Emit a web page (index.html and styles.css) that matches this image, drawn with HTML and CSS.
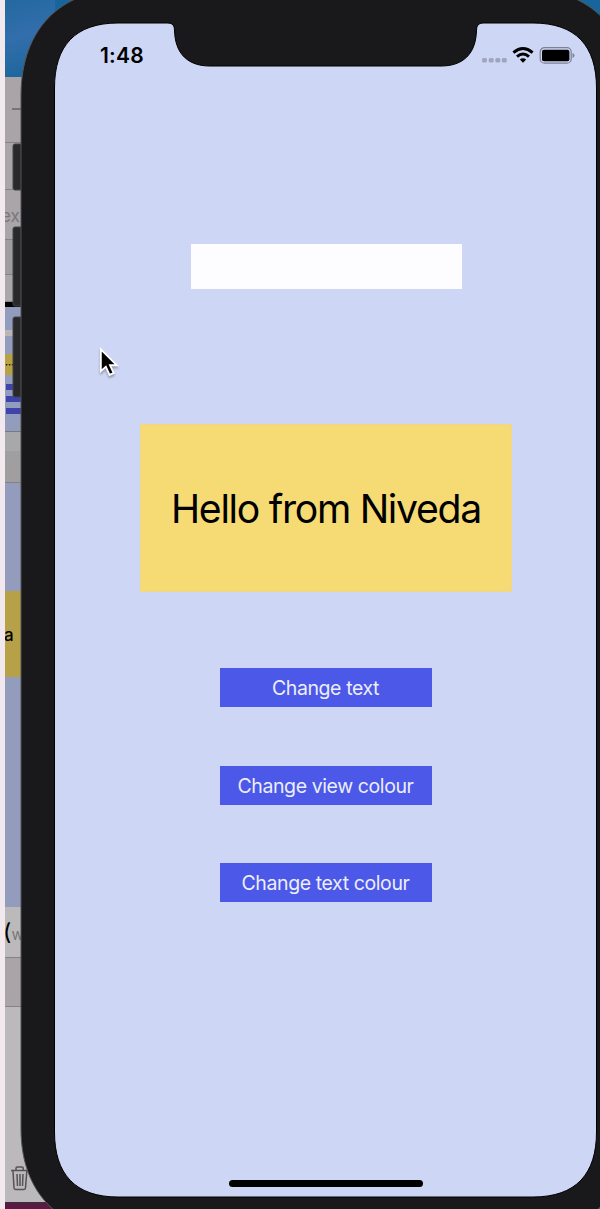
FILE: index.html
```html
<!DOCTYPE html>
<html lang="en">
<head>
<meta charset="utf-8">
<title>Simulator</title>
<link rel="stylesheet" href="styles.css">
</head>
<body>
<div class="desktop">
  <div class="backdrop">
    <div class="wallpaper"></div>
    <div class="toolbar"><span class="dash"></span></div>
    <div class="pane pane-a"></div>
    <div class="pane pane-b">ex</div>
    <div class="pane pane-c"></div>
    <div class="pane pane-d"></div>
    <div class="black-bar"></div>
    <div class="preview">
      <div class="mini-field"></div>
      <div class="mini-label">···</div>
      <div class="mini-button"></div>
      <div class="mini-button"></div>
      <div class="mini-button"></div>
    </div>
    <div class="pane pane-e"></div>
    <div class="pane pane-f"></div>
    <div class="canvas"><div class="canvas-label">a</div></div>
    <div class="device-name"><span class="paren">(</span><span class="w">w</span></div>
    <div class="pane pane-g"></div>
    <div class="footer">
      <svg width="18" height="26" viewBox="0 0 18 26" fill="none" stroke="#555356" stroke-width="1.5"><path d="M0 4.500H18M5 4V2.200Q5 1 6.200 1H11Q12.200 1 12.200 2.200V4M2 5L3 22Q3.100 23.400 4.500 23.400H13Q14.400 23.400 14.500 22L15.800 5M6 8L6.500 20M9 8V20M12 8L11.500 20"/></svg>
    </div>
    <div class="dock"></div>
  </div>

  <div class="phone">
    <svg class="frame" width="600" height="1209" viewBox="0 0 600 1209">
      <g class="side-buttons">
        <rect x="13" y="144" width="14" height="46" rx="2"/>
        <rect x="13" y="227" width="14" height="79" rx="2"/>
        <rect x="13" y="317" width="14" height="80" rx="2"/>
      </g>
      <path class="bezel" d="M21 95C21 30 60 -11 125 -11H526C591 -11 630 30 630 95V1129C630 1193 591 1233 526 1233H125C60 1233 21 1193 21 1129Z"/>
      <path class="glass" d="M54.500 88C54.500 46 75 23 118 23H168Q174.500 23 174.500 30C175 54 188 66 210 66H441C463 66 476 54 476.500 30Q476.500 23 483 23H533C576 23 596.500 46 596.500 88V1132C596.500 1174 576 1197 533 1197H118C75 1197 54.500 1174 54.500 1132Z"/>
    </svg>
    <div class="screen">
      <div class="status">
        <span class="time">1:48</span>
        <svg width="94" height="18" viewBox="0 0 94 18">
          <g fill="#a0a5bf"><rect x="1" y="12" width="5" height="4.500" rx="1.500"/><rect x="7.700" y="12" width="5" height="4.500" rx="1.500"/><rect x="14.300" y="12" width="5" height="4.500" rx="1.500"/><rect x="20.800" y="12" width="5" height="4.500" rx="1.500"/></g>
          <g fill="none" stroke="#000" stroke-width="3"><path d="M32.400 6.600Q42 -1.500 51.600 6.600M36 10.600Q42 5.400 48 10.600"/></g>
          <path d="M38.800 13.600Q42 10.800 45.200 13.600L42 16.800Z"/>
          <rect x="59.200" y="1.700" width="31" height="15.500" rx="4.300" fill="none" stroke="#7c8193" stroke-width="1.200"/>
          <rect x="61" y="3.700" width="27.400" height="11.500" rx="2"/>
          <path d="M91.500 6.900Q93.500 7.700 93.500 9.500Q93.500 11.200 91.500 12Z" fill="#7c8193"/>
        </svg>
      </div>
      <div class="field"></div>
      <div class="hello">Hello from Niveda</div>
      <div class="buttons">
        <div class="button">Change text</div>
        <div class="button">Change view colour</div>
        <div class="button last">Change text colour</div>
      </div>
      <div class="home"></div>
    </div>
  </div>

  <svg class="cursor" width="22" height="32" viewBox="0 0 24 34"><path d="M2 2V26L7.500 21L11.500 30L16 28L12 19.500H19.500Z" fill="#000" stroke="#fff" stroke-width="2"/></svg>
</div>
</body>
</html>
```

FILE: styles.css
```css
* { box-sizing: border-box; }
body { margin: 0; font-family: Inter, "Liberation Sans", sans-serif; }
.desktop {
  position: relative;
  width: 600px;
  height: 1209px;
  overflow: hidden;
  background: linear-gradient(90deg, #f1e9ee 0 5px, #17659a 5px);
}

.backdrop {
  display: flex;
  flex-direction: column;
  width: 50px;
  height: 1209px;
  margin-left: 5px;
  overflow: hidden;
  background: #b0acaf;
}
.backdrop > div { flex: none; }
.wallpaper { height: 77px; background: linear-gradient(165deg, #24699f, #326eac 45%, #19659a); }
.toolbar { height: 66px; padding: 31px 0 0 7px; background: #aaa4a8; border-bottom: 1px solid #858184; }
.dash { display: block; width: 20px; height: 2px; background: #777376; }
.pane { background: #aaa5a8; border-bottom: 1px solid #858184; }
.pane-a { height: 47px; }
.pane-b { height: 50px; padding-top: 16px; font-size: 17px; line-height: 20px; text-indent: -4px; color: #7b7779; }
.pane-c { height: 35px; background: #a09da0; }
.pane-d { height: 27px; background: #aaa7a9; }
.black-bar { height: 5px; background: #000; }
.preview { height: 124px; padding-top: 23px; background: #929dbd; }
.mini-field { height: 6px; background: #bab6b8; }
.mini-label { height: 21px; margin: 18px 0 9px; background: #b9a244; font-size: 9px; line-height: 21px; font-weight: 700; }
.mini-button { height: 6px; margin: 0 0 6px 1px; background: #4143ad; }
.pane-e { height: 20px; background: #a7a8aa; border-top: 1px solid #77797e; border-bottom: 0; }
.pane-f { height: 32px; background: #a09e9f; }
.canvas { height: 424px; padding-top: 108px; background: #949cbd; }
.canvas-label { height: 86px; background: #b6a148; font-size: 17px; font-weight: 500; line-height: 89px; text-indent: -1px; }
.device-name { height: 51px; padding-top: 12px; background: #bcb9bb; border-bottom: 1px solid #858184; font-size: 23px; line-height: 26px; white-space: nowrap; }
.paren { margin-left: -2px; }
.w { font-size: 15px; color: #777; }
.pane-g { height: 49px; background: #aaa4a8; }
.footer { height: 195px; padding: 159px 0 0 6px; background: #bbb9bb; }
.dock { height: 7px; background: #581c43; border-top: 1px solid #3b3037; }

.phone { position: absolute; inset: 0; }
.frame { position: absolute; inset: 0; }
.side-buttons { fill: #29292b; stroke: #454547; }
.bezel { fill: #19181a; stroke: #555557; stroke-width: 1; }
.glass { fill: #cdd6f5; stroke: #000; stroke-width: 1; }
.screen {
  position: relative;
  display: flex;
  flex-direction: column;
  align-items: center;
  width: 542px;
  margin-left: 55px;
  padding-top: 43px;
}
.status { display: flex; justify-content: space-between; align-self: stretch; height: 25px; padding: 3px 22px 0 45px; }
.time { font-size: 21px; font-weight: 600; line-height: 20px; letter-spacing: 0.2px; }
.field { width: 271px; height: 45px; margin-top: 176px; background: #fdfcff; }
.hello {
  width: 372px;
  height: 168px;
  margin-top: 135px;
  background: #f6db75;
  border: 1px solid #ecd78b;
  font-size: 39.2px;
  line-height: 168px;
  letter-spacing: -1.3px;
  text-align: center;
  white-space: nowrap;
}
.buttons { display: flex; flex-direction: column; gap: 59px; margin: 76px 1px 0 0; }
.button { width: 212px; height: 39px; background: #4b58e8; color: #eceefa; font-size: 19.5px; line-height: 40px; letter-spacing: -0.4px; text-align: center; white-space: nowrap; }
.last { margin-top: -1px; }
.home { width: 194px; height: 7px; margin-top: 278px; border-radius: 4px; background: #000; }
.cursor { position: absolute; left: 99px; top: 347px; filter: drop-shadow(0 2px 1px rgba(0, 0, 0, .3)); }
```
